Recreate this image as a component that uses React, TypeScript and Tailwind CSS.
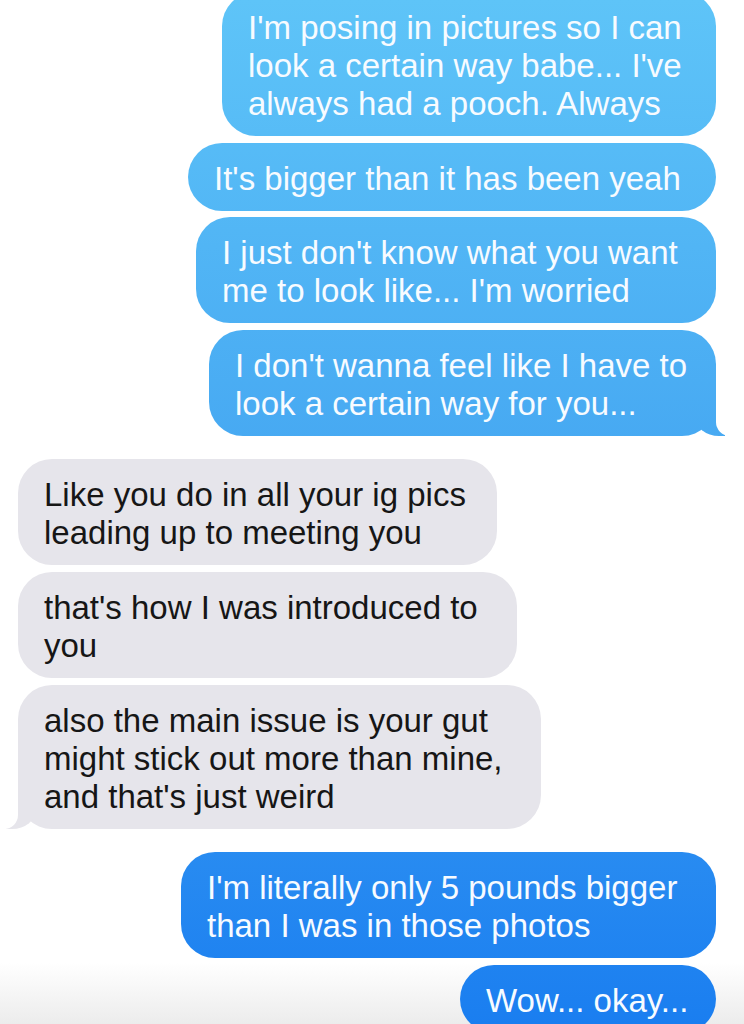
import React from 'react';

type Side = 'me' | 'them';

interface BubbleProps {
  side: Side;
  lines: string[];
  className: string;
  tail?: boolean;
}

const Bubble: React.FC<BubbleProps> = ({ side, lines, className, tail }) => {
  const isMe = side === 'me';

  const bubbleClasses = `
    relative rounded-[34px] pt-[17px] pb-[13px] px-[26px] text-[33px] leading-[38px] whitespace-nowrap
    ${
      isMe
        ? 'self-end mr-[28px] text-[#f7fbff] bg-fixed bg-linear-to-b from-[#5ec4f8] via-[#46a8f2] via-45% to-[#1a7ef0]'
        : 'self-start ml-[18px] bg-[#e6e5eb] text-[#161616]'
    }
    ${className}
  `;

  return (
    <div className={bubbleClasses}>
      {/* Tail, carved out of a filled block by a white rounded block */}
      {tail && isMe && (
        <>
          <span className="absolute bottom-0 -right-[9px] h-[34px] w-[30px] rounded-bl-[24px_20px] bg-fixed bg-linear-to-b from-[#5ec4f8] via-[#46a8f2] via-45% to-[#1a7ef0]" />
          <span className="absolute bottom-0 -right-[32px] h-[36px] w-[32px] rounded-bl-[14px] bg-white" />
        </>
      )}
      {tail && !isMe && (
        <>
          <span className="absolute bottom-0 -left-[12px] h-[34px] w-[30px] rounded-br-[24px_20px] bg-[#e6e5eb]" />
          <span className="absolute bottom-0 -left-[32px] h-[36px] w-[32px] rounded-br-[14px] bg-white" />
        </>
      )}
      <span className="relative block">
        {lines.map((line, i) => (
          <span key={i} className="block">
            {line}
          </span>
        ))}
      </span>
    </div>
  );
};

export default function App() {
  return (
    <div className="h-[1024px] w-[744px] overflow-hidden bg-linear-to-b from-white via-white via-[94%] to-[#ececec] font-['Liberation_Sans',Arial,sans-serif]">
      <div className="flex flex-col">
        <Bubble
          side="me"
          className="-mt-[8px] w-[494px]"
          lines={["I'm posing in pictures so I can", "look a certain way babe... I've", 'always had a pooch. Always']}
        />
        <Bubble side="me" className="mt-[7px] w-[528px]" lines={["It's bigger than it has been yeah"]} />
        <Bubble
          side="me"
          className="mt-[6px] w-[520px]"
          lines={["I just don't know what you want", "me to look like... I'm worried"]}
        />
        <Bubble
          side="me"
          tail
          className="mt-[7px] w-[507px]"
          lines={["I don't wanna feel like I have to", 'look a certain way for you...']}
        />

        <Bubble
          side="them"
          className="mt-[23px] w-[479px]"
          lines={['Like you do in all your ig pics', 'leading up to meeting you']}
        />
        <Bubble
          side="them"
          className="mt-[7px] w-[499px]"
          lines={["that's how I was introduced to", 'you']}
        />
        <Bubble
          side="them"
          tail
          className="mt-[7px] w-[523px]"
          lines={['also the main issue is your gut', 'might stick out more than mine,', "and that's just weird"]}
        />

        <Bubble
          side="me"
          className="mt-[23px] w-[535px]"
          lines={["I'm literally only 5 pounds bigger", 'than I was in those photos']}
        />
        <Bubble side="me" className="mt-[7px] w-[256px]" lines={['Wow... okay...']} />
      </div>
    </div>
  );
}
